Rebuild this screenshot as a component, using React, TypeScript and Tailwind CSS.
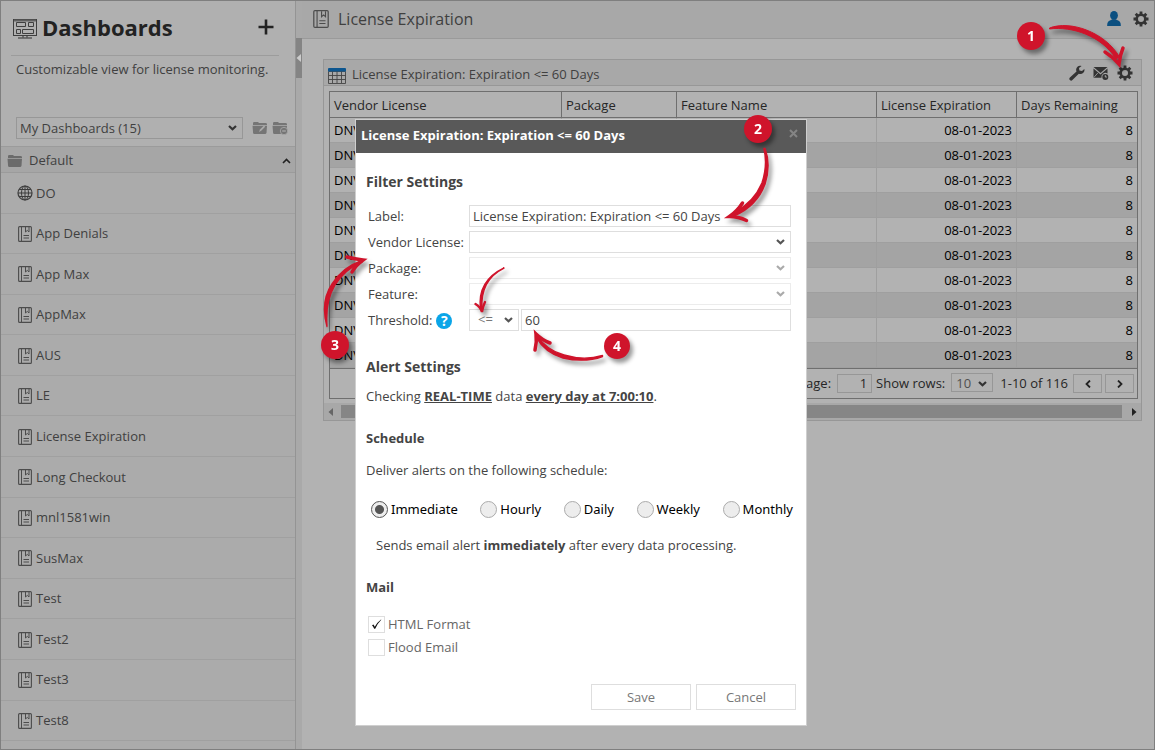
import React, { useState } from 'react'
import clsx from 'clsx'

const DASHBOARDS = [
  'DO', 'App Denials', 'App Max', 'AppMax', 'AUS', 'LE', 'License Expiration',
  'Long Checkout', 'mnl1581win', 'SusMax', 'Test', 'Test2', 'Test3', 'Test8',
]

const ROWS = Array.from({ length: 10 }, (_, id) => ({ id, vendor: 'DNV', date: '08-01-2023', days: 8 }))

const SCHEDULES = ['Immediate', 'Hourly', 'Daily', 'Weekly', 'Monthly']

function Chevron({ className = '' }: { className?: string }) {
  return (
    <svg viewBox="0 0 9 6" className={clsx('pointer-events-none absolute top-1/2 -translate-y-1/2 w-[9px] h-[6px]', className)}>
      <path d="M1 1l3.5 3.2L8 1" fill="none" stroke="currentColor" strokeWidth="2.2" />
    </svg>
  )
}

function GlobeIcon() {
  return (
    <svg viewBox="0 0 16 16" className="w-4 h-4 shrink-0" fill="none" stroke="#3c3c3c">
      <circle cx="8" cy="8" r="7" strokeWidth="1.2" />
      <ellipse cx="8" cy="8" rx="3.5" ry="7" />
      <path d="M8 1v14M1 8h14M2.2 4.5h11.6M2.2 11.5h11.6" />
    </svg>
  )
}

function BookIcon({ className }: { className: string }) {
  return (
    <svg viewBox="0 0 14 16" className={clsx('shrink-0', className)} fill="none" stroke="#4c4c4c">
      <rect x="0.6" y="0.6" width="12.8" height="14.8" rx="1" strokeWidth="1.1" />
      <path d="M3.5 0.5v15" />
      <path d="M7.5 1v5l1.8-1.6L11 6V1" />
      <path d="M5.5 9.5h5.5M5.5 12h5.5" />
    </svg>
  )
}

function DashboardIcon() {
  return (
    <svg viewBox="0 0 24 20" className="w-6 h-5" fill="none" stroke="#3f3f3f">
      <rect x="0.5" y="0.5" width="23" height="16" />
      <path d="M1 1.5h22" stroke="#606060" strokeWidth="2" />
      <path d="M3.5 3.5h9v4h-9zM15.500 3.500h5v4h-5zM3.500 10.500h4v4h-4zM9.500 10.500h11v4h-11z" />
      <path d="M10 17v2M14 17v2M5 19h14" strokeWidth="1.500" stroke="#5a5a5a" />
    </svg>
  )
}

function FolderIcon({ className, badge }: { className: string; badge?: 'edit' | 'remove' }) {
  return (
    <svg viewBox="0 0 16 14" className={className}>
      <path d="M1 4V2.200Q1 1 2.200 1H6l1 1h6.500Q15 2 15 3.200V4z" fill="currentColor" />
      <path d="M0.500 4.700h14.500l-0.500 7Q14.300 13 13 13H2.200Q1.200 13 1.100 12z" fill="currentColor" />
      {badge === 'edit' && <path d="M7 11l1-2.500 4-4 1.200 1.200-4 4z" fill="#ababab" />}
      {badge === 'remove' && (
        <>
          <circle cx="12" cy="10" r="3.700" fill="currentColor" stroke="#ababab" strokeWidth="0.800" />
          <path d="M10.200 10h3.600" stroke="#ababab" strokeWidth="1.200" />
        </>
      )}
    </svg>
  )
}

function GearIcon() {
  return (
    <svg viewBox="0 0 16 16" className="w-4 h-4" stroke="#333" fill="none">
      <circle cx="8" cy="8" r="4.300" strokeWidth="2.600" />
      <path
        d="M8 0.500v2.500M8 13v2.500M0.500 8H3M13 8h2.500M2.700 2.700l1.700 1.700M11.600 11.600l1.700 1.700M13.300 2.700l-1.700 1.700M4.400 11.600l-1.700 1.700"
        strokeWidth="2.800"
      />
    </svg>
  )
}

function WrenchIcon() {
  return (
    <svg viewBox="0 0 16 16" className="w-4 h-4" fill="#333">
      <path d="M10.800 0.800a4 4 0 0 0-3.300 5.600L0.900 12.500a1.700 1.700 0 0 0 2.500 2.500L9.800 8.700a4 4 0 0 0 5.500-4.700L13 6l-2.600-0.500L10 3l2.600-2.100a4 4 0 0 0-1.800-0.100z" />
    </svg>
  )
}

function MailClockIcon() {
  return (
    <svg viewBox="0 0 16 16" className="w-4 h-4">
      <path d="M0.500 2h14L7.500 8z" fill="#333" />
      <path d="M0.500 3.600v9.200h8a4 4 0 0 1 6-4.300V3.600L7.500 9.500z" fill="#333" />
      <path d="M0.800 12.500l4-4.500" stroke="#a8a8a8" strokeWidth="0.800" />
      <circle cx="12.300" cy="12" r="3" fill="#333" />
      <path d="M12.300 10.200V12h1.600" stroke="#a8a8a8" fill="none" />
    </svg>
  )
}

function UserIcon() {
  return (
    <svg viewBox="0 0 14 15" className="w-[14px] h-[15px]" fill="#0b4f80">
      <ellipse cx="7" cy="4.400" rx="3.900" ry="4.400" />
      <path d="M0.200 15q-0.400-5 3.800-6l1.200-0.700h3.600l1.200 0.700q4.200 1 3.800 6z" />
    </svg>
  )
}

function GridIcon() {
  return (
    <svg viewBox="0 0 18 16" className="w-[18px] h-4">
      <path d="M0.500 3.500h17v12h-17zM0.500 7.500h17M0.500 11.500h17M4.500 3v12M9 3v12M13.500 3v12" fill="none" stroke="#444" strokeWidth="0.900" />
      <path d="M0 1q0-1 1-1h16q1 0 1 1v2.500H0z" fill="#0d568f" />
    </svg>
  )
}

function Marker({ x, y, n, r = 14 }: { x: number; y: number; n: number; r?: number }) {
  return (
    <>
      <circle cx={x} cy={y} r={r} fill="#cf142b" />
      <text x={x} y={y + 5} textAnchor="middle" fontSize="14" fontWeight="700" fill="#fff">{n}</text>
    </>
  )
}

function Sidebar() {
  return (
    <aside className="flex flex-col w-[295px] shrink-0 bg-[#ababab] border-r border-[#949494]">
      <div className="bg-[#b0b0b0]">
        <div className="flex items-center h-[55px] ml-[10px] mr-4 pl-[2px] pr-[5px] pb-[2px] border-b border-[#9c9c9c]">
          <span className="mt-1"><DashboardIcon /></span>
          <h1 className="ml-[5px] text-[22px] font-bold leading-8 text-[#222]">Dashboards</h1>
          <button aria-label="Add dashboard" className="ml-auto">
            <svg viewBox="0 0 16 16" className="w-4 h-4"><path d="M8 0.500v15M0.500 8h15" stroke="#222" strokeWidth="2.600" /></svg>
          </button>
        </div>
        <p className="mt-[3px] pl-[15px] leading-5">Customizable view for license monitoring.</p>
        <div className="flex items-center gap-1 mt-[38px] mb-[7px] pl-[15px] pr-[7px]">
          <div className="relative flex-1 mr-[5px]">
            <select aria-label="Dashboard group" className="appearance-none w-full h-[22px] px-[3px] pt-px border border-[#979797] text-[#404040]">
              <option>My Dashboards (15)</option>
            </select>
            <Chevron className="right-[6px] text-[#333]" />
          </div>
          <button aria-label="Edit folder"><FolderIcon className="w-4 h-[14px] text-[#757575]" badge="edit" /></button>
          <button aria-label="Remove folder"><FolderIcon className="w-4 h-[14px] text-[#757575]" badge="remove" /></button>
        </div>
      </div>
      <button className="flex items-center h-[27px] pl-[6px] pr-1 pt-[2px] bg-[#a6a6a6] border-y border-[#9b9b9b]">
        <FolderIcon className="w-4 h-[14px] text-[#6b6b6b]" />
        <span className="ml-[6px]">Default</span>
        <svg viewBox="0 0 9 6" className="ml-auto w-[9px] h-[6px]"><path d="M1 5l3.500-3.500L8 5" fill="none" stroke="#222" strokeWidth="1.600" /></svg>
      </button>
      <ul className="flex flex-col flex-1 pb-2">
        {DASHBOARDS.map((name, i) => (
          <li key={name} className="flex flex-1 min-h-10 border-b border-[#a0a0a0]">
            <a href="#" className="flex flex-1 items-center pt-px pl-4 gap-[3px]">
              <span className="flex w-4 justify-center">
                {i === 0 ? <GlobeIcon /> : <BookIcon className="w-[14px] h-4" />}
              </span>
              {name}
            </a>
          </li>
        ))}
      </ul>
    </aside>
  )
}

function LicenseTable() {
  return (
    <div className="m-[5px] mr-[3px] mb-1 border border-[#6f6f6f]">
      <table className="w-full table-fixed border-separate border-spacing-0 text-black">
        <thead className="text-left text-[#262626]">
          <tr className="h-[26px] *:border-b *:border-r *:border-[#6f6f6f] *:px-1 *:pt-[2px] *:font-normal *:last:border-r-0">
            <th>Vendor License</th>
            <th className="w-[115px]">Package</th>
            <th className="w-[200px]">Feature Name</th>
            <th className="w-[140px]">License Expiration</th>
            <th className="w-[120px]">Days Remaining</th>
          </tr>
        </thead>
        <tbody>
          {ROWS.map((r) => (
            <tr key={r.id} className="h-[25px] even:bg-[#a4a4a4] *:border-r *:border-b *:border-[#9f9f9f] *:px-1 *:pt-[2px] *:last:border-r-0">
              <td>{r.vendor}</td>
              <td />
              <td />
              <td className="text-right">{r.date}</td>
              <td className="text-right">{r.days}</td>
            </tr>
          ))}
        </tbody>
      </table>
      <div className="flex items-center justify-end h-[30px] pr-[3px] border-t border-[#6f6f6f] text-[#262626]">
        <label htmlFor="page">Page:</label>
        <input id="page" defaultValue="1" className="ml-[6px] mr-1 w-[35px] h-[19px] px-1 border border-[#979797] text-right" />
        <label htmlFor="rows">Show rows:</label>
        <div className="relative ml-[6px] mr-[7px]">
          <select id="rows" className="appearance-none w-[42px] h-[19px] pl-1 border border-[#979797] text-[#505050]">
            <option>10</option>
          </select>
          <Chevron className="right-[6px] text-[#333]" />
        </div>
        <span>1-10 of 116</span>
        <button aria-label="Previous page" className="flex items-center justify-center ml-[5px] w-[29px] h-[19px] border border-[#979797]">
          <svg viewBox="0 0 6 8" className="w-[6px] h-2"><path d="M5 0.500L1.500 4 5 7.500" fill="none" stroke="#222" strokeWidth="1.800" /></svg>
        </button>
        <button aria-label="Next page" className="flex items-center justify-center ml-[3px] w-[29px] h-[19px] border border-[#979797]">
          <svg viewBox="0 0 6 8" className="w-[6px] h-2"><path d="M1 0.500L4.500 4 1 7.500" fill="none" stroke="#222" strokeWidth="1.800" /></svg>
        </button>
      </div>
    </div>
  )
}

function Widget() {
  return (
    <section className="border border-[#979797]">
      <header className="relative flex items-center h-[26px] pl-1 pr-2 bg-[#a8a8a8] border-b border-[#979797]">
        <span className="mt-[6px]"><GridIcon /></span>
        <h2 className="ml-[6px] mt-1">License Expiration: Expiration &lt;= 60 Days</h2>
        <div className="flex gap-2 ml-auto">
          <button aria-label="Configure"><WrenchIcon /></button>
          <button aria-label="Mail schedule"><MailClockIcon /></button>
          <button aria-label="Widget settings"><GearIcon /></button>
        </div>
        <svg viewBox="1010 14 130 60" className="pointer-events-none absolute right-[1px] -bottom-[-11px] w-[130px] h-[60px] overflow-visible drop-shadow-[3px_4px_2px_rgba(0,0,0,0.4)]">
          <Marker x={1031} y={36} n={1} r={14} />
          <path d="M1049.500 28C1070 20 1105 32 1119.500 57L1116 59C1102 36 1072 26 1049.500 29z" fill="#cf142b" stroke="#cf142b" strokeLinejoin="round" />
          <path d="M1105 52q8 5 14 12q1-9 4-16" fill="none" stroke="#cf142b" strokeWidth="3.500" strokeLinecap="round" />
        </svg>
      </header>
      <LicenseTable />
      <div className="flex items-center h-[17px] px-1 bg-[#a8a8a8]">
        <svg viewBox="0 0 5 8" className="w-[5px] h-2"><path d="M5 0v8L0.500 4z" fill="#666" /></svg>
        <div className="flex-1 h-[13px] ml-2 mr-[10px] bg-[#868686]" />
        <svg viewBox="0 0 5 8" className="w-[5px] h-2"><path d="M0 0v8L4.500 4z" fill="#222" /></svg>
      </div>
    </section>
  )
}

function FieldSelect({ id, disabled, children }: { id: string; disabled?: boolean; children?: React.ReactNode }) {
  return (
    <div className="relative flex-1">
      <select
        id={id}
        disabled={disabled}
        className="appearance-none block w-full h-[22px] px-1 bg-white border border-[#dedede] disabled:border-[#ececec] disabled:opacity-100"
      >
        {children}
      </select>
      <Chevron className={clsx('right-[6px]', disabled ? 'text-[#aaa]' : 'text-[#555]')} />
    </div>
  )
}

const label = 'w-[101px] shrink-0 pt-[2px] whitespace-nowrap'

function SettingsDialog() {
  const [schedule, setSchedule] = useState('Immediate')
  const [html, setHtml] = useState(true)
  const [flood, setFlood] = useState(false)

  const check = (text: string, checked: boolean, set: (v: boolean) => void) => (
    <label className="flex items-center gap-[3px] h-[17px] text-[#666]">
      <span className="relative flex">
        <input
          type="checkbox"
          checked={checked}
          onChange={(e) => set(e.target.checked)}
          className="appearance-none w-[17px] h-[17px] bg-white border border-[#dedede]"
        />
        {checked && (
          <svg viewBox="0 0 17 17" className="pointer-events-none absolute inset-0">
            <path d="M4 9.200l1.500-0.700 1.300 2.200Q9 6.500 13 3.500l0.300 0.300Q9.500 7.500 7.200 12.800H6.200Q5.200 10.500 4 9.200z" fill="#111" />
          </svg>
        )}
      </span>
      {text}
    </label>
  )

  return (
    <div role="dialog" aria-label="Widget settings" className="relative self-start w-[452px] bg-white border border-[#cfcfcf] text-[#444]">
      <header className="flex items-center h-[33px] pl-[5px] pr-2 pb-[2px] bg-[#595959] text-white">
        <h2 className="font-bold">License Expiration: Expiration &lt;= 60 Days</h2>
        <button aria-label="Close" className="ml-auto mb-1">
          <svg viewBox="0 0 9 9" className="w-[9px] h-[9px]"><path d="M1 1l7 7M8 1L1 8" stroke="#858585" strokeWidth="2" /></svg>
        </button>
      </header>

      <form className="pt-[19px] px-[10px] pb-[15px]" onSubmit={(e) => e.preventDefault()}>
        <h3 className="text-sm font-bold">Filter Settings</h3>
        <div className="mt-[13px] ml-[2px] mr-[5px] space-y-1">
          <div className="flex items-center h-[22px]">
            <label htmlFor="label" className={label}>Label:</label>
            <input id="label" defaultValue="License Expiration: Expiration <= 60 Days" className="flex-1 h-[22px] px-[3px] border border-[#dedede]" />
          </div>
          <div className="flex items-center h-[22px]">
            <label htmlFor="vendor" className={label}>Vendor License:</label>
            <FieldSelect id="vendor" />
          </div>
          <div className="flex items-center h-[22px]">
            <label htmlFor="package" className={label}>Package:</label>
            <FieldSelect id="package" disabled />
          </div>
          <div className="flex items-center h-[22px]">
            <label htmlFor="feature" className={label}>Feature:</label>
            <FieldSelect id="feature" disabled />
          </div>
          <div className="flex items-center h-[22px]">
            <div className={clsx(label, 'flex items-center gap-1')}>
              <label htmlFor="threshold">Threshold:</label>
              <span className="flex items-center justify-center w-4 h-4 rounded-full bg-[#0aa5e8] text-white text-sm font-bold leading-4">?</span>
            </div>
            <div className="relative mr-[2px]">
              <select aria-label="Comparison" className="appearance-none block w-[50px] h-[22px] pl-2 bg-white border border-[#dedede] text-[#777]">
                <option>&lt;=</option>
              </select>
              <Chevron className="right-[6px] text-[#555]" />
            </div>
            <input id="threshold" defaultValue="60" className="flex-1 min-w-0 h-[22px] px-[3px] border border-[#dedede]" />
          </div>
        </div>

        <h3 className="mt-[26px] text-sm font-bold">Alert Settings</h3>
        <p className="mt-[9px] leading-5">
          Checking <a href="#" className="font-bold underline">REAL-TIME</a> data <a href="#" className="font-bold underline">every day at 7:00:10</a>.
        </p>

        <h4 className="mt-[22px] font-bold leading-5">Schedule</h4>
        <p className="mt-3 leading-5">Deliver alerts on the following schedule:</p>
        <div className="flex justify-between mt-5 ml-[5px] mr-[3px] font-['Noto_Sans',sans-serif] text-black">
          {SCHEDULES.map((s) => (
            <label key={s} className="flex items-center gap-[3px] h-[18px]">
              <input
                type="radio"
                name="schedule"
                checked={schedule === s}
                onChange={() => setSchedule(s)}
                className="appearance-none w-[17px] h-[17px] rounded-full bg-[#ededed] border border-[#ababab] checked:border-[#555] checked:bg-[radial-gradient(circle,#555_4px,#ededed_5px)]"
              />
              <span className="pt-[2px]">{s}</span>
            </label>
          ))}
        </div>
        <p className="mt-[17px] ml-[10px] leading-5">Sends email alert <b>immediately</b> after every data processing.</p>

        <h4 className="mt-[22px] font-bold leading-5">Mail</h4>
        <div className="mt-[19px] ml-[2px] space-y-[6px]">
          {check('HTML Format', html, setHtml)}
          {check('Flood Email', flood, setFlood)}
        </div>

        <div className="flex justify-end gap-[5px] mt-7 text-[#777]">
          <button type="submit" className="w-[100px] h-[26px] pt-px border border-[#dedede]">Save</button>
          <button type="button" className="w-[100px] h-[26px] pt-px border border-[#dedede]">Cancel</button>
        </div>
      </form>

      <svg
        viewBox="315 110 490 260"
        className="pointer-events-none absolute -left-[41px] -top-[10px] w-[490px] h-[260px] overflow-visible drop-shadow-[3px_4px_2px_rgba(0,0,0,0.4)]"
      >
        <g fill="#cf142b" stroke="#cf142b" strokeLinejoin="round">
          <path d="M765 148.500Q771 165 765 184Q757 206 734 216L735 212Q754 202 762 183Q768 165 764 148.500z" strokeWidth="1.600" />
          <path d="M327 326.500Q320 302 332 284Q343 267 361 261L362 262Q345 269 335 285Q325 302 327 326.500z" strokeWidth="1.400" />
          <path d="M504 268Q480 280 482 309L480.500 309Q477 281 504 268z" strokeWidth="1.400" />
          <path d="M602.500 355.500Q584 361 564 355Q546 350 537 335L536 337Q545 353 563 358Q585 363 602.500 356.500z" strokeWidth="1.400" />
        </g>
        <g fill="none" stroke="#cf142b" strokeWidth="3.500" strokeLinecap="round">
          <path d="M742.500 203q-5 8-13 13.500q9 0 17 4" />
          <path d="M347 257q8 2 16 3q-7 5-11 12" />
          <path d="M475.500 304q5 3 6.500 8q1-6 3-10" strokeWidth="2.400" />
          <path d="M550 343q-8-3-14-9q1 8-1 16" />
        </g>
        <Marker x={758} y={129} n={2} />
        <Marker x={335} y={345} n={3} />
        <Marker x={617} y={346} n={4} r={13} />
      </svg>
    </div>
  )
}

export default function App() {
  return (
    <div className="relative flex min-h-screen bg-[#b2b2b2] border border-[#7f7f7f] font-['Open_Sans',sans-serif] text-[13px] text-[#404040]">
      <Sidebar />
      <div className="w-[6px] shrink-0 pt-[37px] bg-[#a9a9a9]">
        <button aria-label="Collapse sidebar" className="flex items-center w-full h-10 bg-[#848484]">
          <svg viewBox="0 0 6 10" className="w-[6px] h-[10px]"><path d="M5 1v8L0.500 5z" fill="#ccc" /></svg>
        </button>
      </div>
      <main className="flex-1 min-w-0">
        <header className="flex items-center h-[38px] pl-[11px] pr-[5px] pb-[2px] bg-[#a8a8a8] border-b border-[#9a9a9a]">
          <BookIcon className="w-4 h-[18px]" />
          <h1 className="ml-[9px] text-base">License Expiration</h1>
          <div className="flex items-center gap-3 ml-auto">
            <button aria-label="Account"><UserIcon /></button>
            <button aria-label="Settings"><GearIcon /></button>
          </div>
        </header>
        <div className="pt-5 pl-[21px] pr-3">
          <Widget />
        </div>
      </main>
      <div className="absolute inset-0 flex justify-center pt-[118px] pl-[7px]">
        <SettingsDialog />
      </div>
    </div>
  )
}
